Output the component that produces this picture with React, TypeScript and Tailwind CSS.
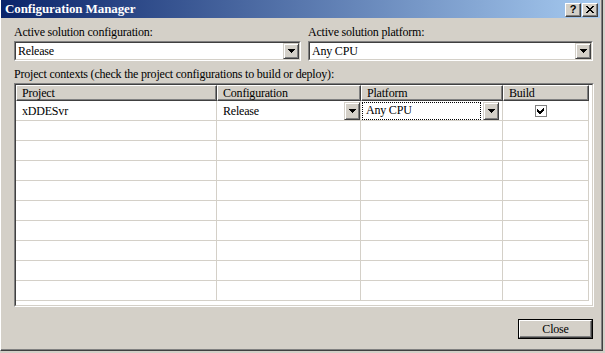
import React from "react";

const Arrow = () => (
  <svg width="7" height="4" viewBox="0 0 7 4" shapeRendering="crispEdges">
    <rect x="0" y="0" width="7" height="1" fill="#000" />
    <rect x="1" y="1" width="5" height="1" fill="#000" />
    <rect x="2" y="2" width="3" height="1" fill="#000" />
    <rect x="3" y="3" width="1" height="1" fill="#000" />
  </svg>
);

const DropBtn = ({ h = "h-full" }: { h?: string }) => (
  <div
    className={`w-[16px] ${h} shrink-0 flex items-center justify-center bg-[#d4d0c8] border border-t-[#d4d0c8] border-l-[#d4d0c8] border-b-[#404040] border-r-[#404040] shadow-[inset_1px_1px_0_#fff,inset_-1px_-1px_0_#808080]`}
  >
    <Arrow />
  </div>
);

const Combo = ({ text, className }: { text: string; className: string }) => (
  <div
    className={`${className} h-[20px] flex bg-white border border-t-[#808080] border-l-[#808080] border-b-white border-r-white`}
  >
    <div className="flex-1 flex border border-t-[#404040] border-l-[#404040] border-b-[#d4d0c8] border-r-[#d4d0c8]">
      <div className="flex-1 pl-[2px] leading-[16px]">{text}</div>
      <DropBtn />
    </div>
  </div>
);

const cols = ["Project", "Configuration", "Platform", "Build"];
const widths = ["w-[201px]", "w-[144px]", "w-[142px]", "w-[86px]"];

export default function App() {
  return (
    <div className="w-[605px] h-[353px] bg-[#d4d0c8] overflow-hidden text-black font-['Liberation_Serif',serif] text-[12px] tracking-[-0.2px]">
      <div className="h-[351px] w-[603px] flex flex-col border-l border-l-white border-r border-r-[#404040] border-b border-b-[#404040] shadow-[inset_-1px_-1px_0_#808080]">
        {/* title bar */}
        <div className="h-[18px] mr-[2px] flex items-center bg-[linear-gradient(to_right,#0a246a,#a6caf0)] pl-[4px] pr-[2px]">
          <div className="flex-1 text-white font-bold text-[13px] tracking-[-0.1px] leading-[18px]">
            Configuration Manager
          </div>
          <div className="flex gap-[1px] mt-[1px]">
            <div className="w-[16px] h-[14px] flex items-center justify-center bg-[#d4d0c8] border border-t-white border-l-white border-b-[#404040] border-r-[#404040] shadow-[inset_-1px_-1px_0_#808080] font-['Liberation_Sans',sans-serif] font-bold text-[11px] leading-none tracking-normal">
              ?
            </div>
            <div className="w-[16px] h-[14px] flex items-center justify-center bg-[#d4d0c8] border border-t-white border-l-white border-b-[#404040] border-r-[#404040] shadow-[inset_-1px_-1px_0_#808080]">
              <svg width="8" height="7" viewBox="0 0 8 7" shapeRendering="crispEdges">
                <path d="M0 0h2v1h1v1h2v-1h1v-1h2v1h-1v1h-1v1h-1v1h1v1h1v1h1v1h-2v-1h-1v-1h-2v1h-1v1h-2v-1h1v-1h1v-1h1v-1h-1v-1h-1v-1h-1z" fill="#000" />
              </svg>
            </div>
          </div>
        </div>

        <div className="flex-1 flex flex-col pl-[13px] pr-[9px]">
          {/* labels + combos */}
          <div className="flex mt-[7px] leading-[15px]">
            <div className="w-[294px]">Active solution configuration:</div>
            <div>Active solution platform:</div>
          </div>
          <div className="flex mt-[1px]">
            <Combo text="Release" className="w-[287px]" />
            <Combo text="Any CPU" className="w-[285px] ml-[7px]" />
          </div>
          <div className="mt-[6px] leading-[15px]">
            Project contexts (check the project configurations to build or deploy):
          </div>

          {/* grid */}
          <div className="mt-[1px] w-[580px] h-[224px] border border-t-[#808080] border-l-[#808080] border-b-white border-r-white">
            <div className="h-full bg-white border border-t-[#404040] border-l-[#404040] border-b-[#d4d0c8] border-r-[#d4d0c8] flex flex-col">
              <div className="flex h-[16px] shrink-0">
                {cols.map((c, i) => (
                  <div
                    key={c}
                    className={`${widths[i]} h-[16px] bg-[#d4d0c8] pl-[5px] leading-[14px] border border-t-white border-l-white border-b-[#404040] border-r-[#404040] shadow-[inset_-1px_-1px_0_#808080]`}
                  >
                    {c}
                  </div>
                ))}
              </div>
              {Array.from({ length: 10 }).map((_, r) => (
                <div key={r} className="flex h-[20px] shrink-0">
                  {cols.map((c, i) => (
                    <div
                      key={c}
                      className={`${widths[i]} h-[20px] border-b border-r border-[#d4d0c8] flex items-center`}
                    >
                      {r === 0 && i === 0 && <div className="pl-[6px] leading-[16px]">xDDESvr</div>}
                      {r === 0 && i === 1 && (
                        <div className="flex-1 flex items-center h-[19px] pl-[6px]">
                          <div className="flex-1 leading-[16px]">Release</div>
                          <DropBtn h="h-[18px]" />
                        </div>
                      )}
                      {r === 0 && i === 2 && (
                        <div className="flex-1 flex items-center h-[19px] pl-[1px]">
                          <div className="w-[119px] h-[18px] border border-dotted border-black pl-[3px] leading-[15px]">
                            Any CPU
                          </div>
                          <div className="ml-[2px]">
                            <DropBtn h="h-[18px]" />
                          </div>
                        </div>
                      )}
                      {r === 0 && i === 3 && (
                        <div className="flex-1 flex justify-center pr-[9px]">
                          <div className="w-[12px] h-[12px] border border-[#808080] bg-white flex items-center justify-center">
                            <svg width="8" height="7" viewBox="0 0 8 7" shapeRendering="crispEdges">
                              <path d="M7 0v3l-4 4h-1l-2-2v-3l2 2h1l3-3z" fill="#000" />
                            </svg>
                          </div>
                        </div>
                      )}
                    </div>
                  ))}
                </div>
              ))}
            </div>
          </div>

          {/* footer */}
          <div className="flex justify-end mt-[12px]">
            <div className="w-[75px] h-[20px] border border-black">
              <div className="h-full flex items-center justify-center border border-t-white border-l-white border-b-[#404040] border-r-[#404040] shadow-[inset_-1px_-1px_0_#808080]">
                Close
              </div>
            </div>
          </div>
        </div>
      </div>
    </div>
  );
}
